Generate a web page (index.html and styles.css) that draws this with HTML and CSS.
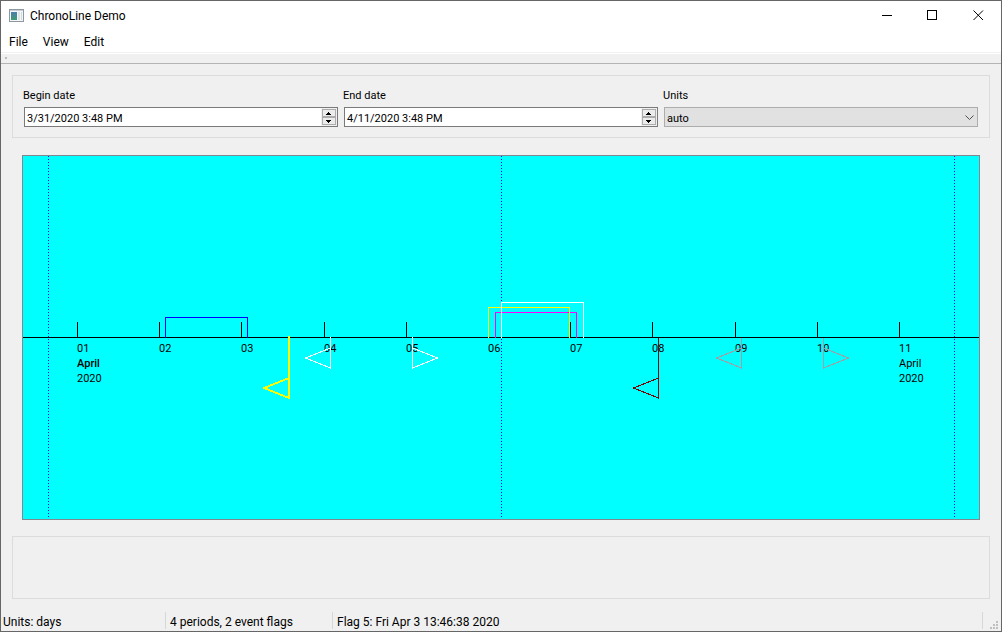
FILE: index.html
```html
<!DOCTYPE html>
<html lang="en">
<head>
<meta charset="utf-8">
<title>ChronoLine Demo</title>
<link rel="stylesheet" href="styles.css">
</head>
<body>
<div class="window">
  <header class="titlebar">
    <svg class="app-icon" width="15" height="13" viewBox="0 0 15 13" aria-hidden="true" shape-rendering="crispEdges">
      <defs><linearGradient id="pane" x1="0" y1="0" x2="0" y2="1"><stop offset="0" stop-color="#4a7fae"/><stop offset="1" stop-color="#3f9a70"/></linearGradient></defs>
      <rect width="15" height="13" fill="#8d979f"/>
      <rect x="1" y="1" width="13" height="11" fill="#f4f5f6"/>
      <rect x="1" y="1" width="13" height="1" fill="#c9ced2"/>
      <rect x="2" y="3" width="6" height="8" fill="url(#pane)"/>
      <rect x="9" y="3" width="2" height="8" fill="#dfe3e6"/>
      <rect x="12" y="3" width="1" height="8" fill="#d5d9dc"/>
    </svg>
    <h1 class="title">ChronoLine Demo</h1>
    <div class="window-buttons">
      <button type="button" aria-label="Minimize"><svg width="12" height="11" viewBox="0 0 12 11" shape-rendering="crispEdges"><path d="M2 5h10v1H2z"/></svg></button>
      <button type="button" aria-label="Maximize"><svg width="11" height="11" viewBox="0 0 11 11" shape-rendering="crispEdges"><path d="M.5.5h9v9h-9z" fill="none" stroke="#000"/></svg></button>
      <button type="button" aria-label="Close"><svg width="11" height="11" viewBox="0 0 11 11"><path d="M.5.5l9.5 9.5M10 .5L.5 10" fill="none" stroke="#000"/></svg></button>
    </div>
  </header>
  <nav class="menubar">
    <button type="button">File</button>
    <button type="button">View</button>
    <button type="button">Edit</button>
  </nav>
  <div class="toolbar"><span class="handle"></span></div>
  <main class="content">
    <form class="panel fields">
      <div class="field">
        <label for="begin">Begin date</label>
        <div class="spin">
          <input id="begin" type="text" value="3/31/2020 3:48 PM">
          <div class="steps">
            <button type="button" aria-label="Later begin date"><svg width="5" height="3" viewBox="0 0 5 3" shape-rendering="crispEdges"><path d="M2 0h1v1h1v1h1v1H0V2h1V1h1z"/></svg></button>
            <button type="button" aria-label="Earlier begin date"><svg width="5" height="3" viewBox="0 0 5 3" shape-rendering="crispEdges"><path d="M0 0h5v1H4v1H3v1H2V2H1V1H0z"/></svg></button>
          </div>
        </div>
      </div>
      <div class="field">
        <label for="end">End date</label>
        <div class="spin">
          <input id="end" type="text" value="4/11/2020 3:48 PM">
          <div class="steps">
            <button type="button" aria-label="Later end date"><svg width="5" height="3" viewBox="0 0 5 3" shape-rendering="crispEdges"><path d="M2 0h1v1h1v1h1v1H0V2h1V1h1z"/></svg></button>
            <button type="button" aria-label="Earlier end date"><svg width="5" height="3" viewBox="0 0 5 3" shape-rendering="crispEdges"><path d="M0 0h5v1H4v1H3v1H2V2H1V1H0z"/></svg></button>
          </div>
        </div>
      </div>
      <div class="field">
        <label for="units">Units</label>
        <div class="combo">
          <select id="units"><option>auto</option><option>days</option></select>
          <svg class="chevron" width="9" height="6" viewBox="0 0 9 6" aria-hidden="true"><path d="M.5.5l4 4 4-4" fill="none" stroke="#505050"/></svg>
        </div>
      </div>
    </form>
    <section class="timeline" aria-label="Timeline">
      <svg viewBox="0 0 956 363" role="img" aria-label="Periods and event flags, April 2020">
        <g class="lines">
          <path class="axis" d="M-2000 181.5H3000"/>
          <path class="axis" d="M54.500 166v15M136.500 166v15M218.500 166v15M301.500 166v15M383.500 166v15M465.500 166v15M547.500 166v15M629.500 166v15M712.500 166v15M794.500 166v15M876.500 166v15"/>
          <path class="dots" d="M25.500 0v361M478.500 0v361M931.500 0v361"/>
        </g>
        <g class="labels">
          <text x="54" y="196">01</text><text class="strong" x="54" y="211">April</text><text x="54" y="226">2020</text>
          <text x="136" y="196">02</text>
          <text x="218" y="196">03</text>
          <text x="301" y="196">04</text>
          <text x="383" y="196">05</text>
          <text x="465" y="196">06</text>
          <text x="547" y="196">07</text>
          <text x="629" y="196">08</text>
          <text x="712" y="196">09</text>
          <text x="794" y="196">10</text>
          <text x="876" y="196">11</text><text x="876" y="211">April</text><text x="876" y="226">2020</text>
        </g>
        <g class="lines">
          <path class="blue" d="M142.500 182V161.500H224.500V182"/>
          <path class="magenta" d="M472.500 182V156.500H553.500V182"/>
          <path class="yellow" d="M465.500 182V151.500H546.500V182"/>
          <path class="white" d="M478.500 182V146.500H560.500V182"/>
          <path class="yellow thick" d="M266 180V243M266 222L241 232L266 242"/>
          <path class="white" d="M307.500 181V212L282.500 202L307.500 192"/>
          <path class="white" d="M389.500 181V212L414.500 202L389.500 192"/>
          <path class="maroon" d="M635.500 182V242L610.500 232L635.500 222"/>
          <path class="gray" d="M718.500 182V212L693.500 202L718.500 192"/>
          <path class="gray" d="M800.500 182V212L825.500 202L800.500 192"/>
        </g>
      </svg>
    </section>
    <section class="panel details" aria-label="Details"></section>
  </main>
  <footer class="statusbar">
    <span class="units">Units: days</span>
    <span class="counts">4 periods, 2 event flags</span>
    <span class="event">Flag 5: Fri Apr 3 13:46:38 2020</span>
    <svg class="grip" width="8" height="8" viewBox="0 0 8 8" aria-hidden="true" shape-rendering="crispEdges"><path fill="#bfbfbf" d="M6 0h2v2H6zM3 3h2v2H3zM6 3h2v2H6zM0 6h2v2H0zM3 6h2v2H3zM6 6h2v2H6z"/></svg>
  </footer>
</div>
</body>
</html>
```
FILE: styles.css
```css
* { box-sizing: border-box; }

body {
  margin: 0;
  font: 12px/16px Roboto, "Noto Sans", sans-serif;
  color: #000;
  background: #f0f0f0;
}

button, input, select { font: inherit; color: inherit; }

button { display: flex; align-items: center; justify-content: center; padding: 0; border: 0; background: none; }

.window {
  display: flex;
  flex-direction: column;
  min-height: 100vh;
  border: 1px solid #666;
}

.titlebar {
  display: flex;
  align-items: center;
  height: 29px;
  padding-left: 8px;
  background: #fff;
}

.title { margin: 0 auto 0 6px; font-size: 12px; font-weight: 400; }

.window-buttons { display: flex; }
.window-buttons button { width: 46px; height: 29px; }

.menubar {
  display: flex;
  height: 23px;
  padding: 1px 0 0 2px;
  background: #fff;
  border-bottom: 1px solid #f0f0f0;
}

.menubar button { padding: 0 6px; margin-right: 3px; }

.toolbar {
  height: 11px;
  padding: 3px 4px;
  border-top: 1px solid #fff;
  border-bottom: 1px solid #b4b4b4;
}

.handle { display: block; width: 2px; height: 2px; background: #bbb; }

.content {
  flex: 1;
  display: flex;
  flex-direction: column;
  gap: 16px;
  padding: 11px 11px 0;
  font-size: 11px;
}

.panel { border: 1px solid #dcdcdc; }

.fields {
  display: grid;
  grid-template-columns: repeat(3, 1fr);
  gap: 5px;
  margin: 0 0 1px;
  padding: 12px 11px 10px 10px;
}

.field { display: flex; flex-direction: column; gap: 3px; }

.spin, .combo { height: 20px; margin-left: 1px; }

.spin {
  display: flex;
  border: 1px solid #7a7a7a;
  background: #fff;
}

.spin input {
  flex: 1;
  min-width: 0;
  padding: 3px 2px 0;
  border: 0;
  outline: 0;
  background: none;
}

.steps {
  display: grid;
  grid-template-rows: 1fr 1fr;
  width: 16px;
  padding: 1px;
  background: #f0f0f0;
}

.steps button { padding-right: 1px; border: 1px solid #acacac; background: #ececec; }

.combo { position: relative; }

.combo select {
  display: block;
  width: 100%;
  height: 20px;
  padding: 3px 2px 0;
  border: 1px solid #adadad;
  border-radius: 0;
  background: #e1e1e1;
  appearance: none;
}

.chevron { position: absolute; right: 4px; top: 8px; pointer-events: none; }

.timeline {
  flex: 1;
  display: flex;
  margin: 0 10px;
  border: 1px solid #828790;
  background: #0ff;
  overflow: hidden;
}

.timeline svg { width: 100%; overflow: visible; }

.lines path { fill: none; stroke-width: 1; shape-rendering: crispEdges; }
.lines .axis { stroke: #000; }
.lines .dots { stroke: #00f; stroke-dasharray: 1 2; }
.lines .blue { stroke: #00f; }
.lines .yellow { stroke: #ff0; }
.lines .magenta { stroke: #f0f; }
.lines .white { stroke: #fff; }
.lines .maroon { stroke: #800000; }
.lines .gray { stroke: #a0a0a4; }
.lines .thick { stroke-width: 2; }

.labels { font-size: 11px; }
.labels .strong { font-weight: 500; }

.details { height: 63px; }

.statusbar {
  display: flex;
  align-items: flex-start;
  height: 32px;
  padding: 13px 3px 2px 2px;
}

.statusbar span { height: 17px; line-height: 20px; border-right: 1px solid #d7d7d7; white-space: nowrap; }
.units { width: 163px; }
.counts { width: 167px; padding-left: 4px; }
.event { flex: 1; padding-left: 4px; }
.grip { align-self: flex-end; margin-left: 7px; }
```
